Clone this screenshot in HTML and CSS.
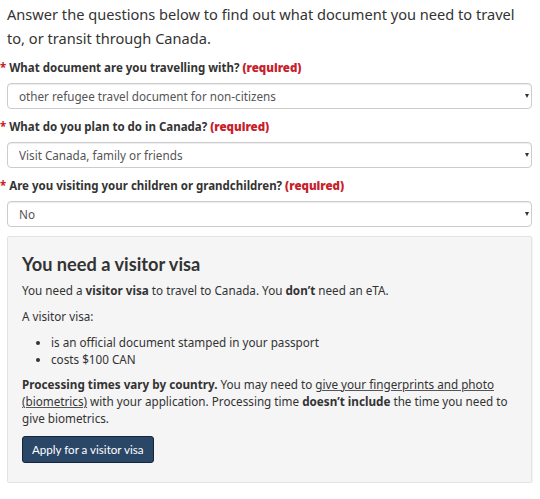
FILE: index.html
```html
<!DOCTYPE html>
<html lang="en">
<head>
<meta charset="utf-8">
<title>Find out if you need a visa</title>
<link rel="stylesheet" href="styles.css">
</head>
<body>
<main class="page">
  <p class="intro">Answer the questions below to find out what document you need to travel to, or transit through Canada.</p>

  <div class="field">
    <label class="label" for="q1"><span class="star">*</span> What document are you travelling with? <strong class="req">(required)</strong></label>
    <div class="select-wrap">
      <select id="q1" class="select"><option>other refugee travel document for non-citizens</option></select>
      <span class="arrow"></span>
    </div>
  </div>

  <div class="field">
    <label class="label" for="q2"><span class="star">*</span> What do you plan to do in Canada? <strong class="req">(required)</strong></label>
    <div class="select-wrap">
      <select id="q2" class="select"><option>Visit Canada, family or friends</option></select>
      <span class="arrow"></span>
    </div>
  </div>

  <div class="field">
    <label class="label" for="q3"><span class="star">*</span> Are you visiting your children or grandchildren? <strong class="req">(required)</strong></label>
    <div class="select-wrap">
      <select id="q3" class="select"><option>No</option></select>
      <span class="arrow"></span>
    </div>
  </div>

  <section class="result">
    <h2 class="result-title">You need a visitor visa</h2>
    <p class="text">You need a <strong>visitor visa</strong> to travel to Canada. You <strong>don’t</strong> need an eTA.</p>
    <p class="text">A visitor visa:</p>
    <ul class="list">
      <li>is an official document stamped in your passport</li>
      <li>costs $100 CAN</li>
    </ul>
    <p class="text"><strong>Processing times vary by country.</strong> You may need to <a class="link" href="#">give your fingerprints and photo (biometrics)</a> with your application. Processing time <strong>doesn’t include</strong> the time you need to give biometrics.</p>
    <a class="btn" href="#">Apply for a visitor visa</a>
  </section>
</main>
</body>
</html>
```

FILE: styles.css
```css
* { box-sizing: border-box; }

html, body {
  margin: 0;
  padding: 0;
  background: #fff;
}

body {
  font-family: "Noto Sans", "DejaVu Sans", sans-serif;
  color: #333;
}

.page {
  width: 540px;
  padding: 2px 0 0 0;
}

.intro {
  margin: 0 18px 9px 7px;
  font-size: 14.6px;
  line-height: 24px;
  color: #333;
}

.field {
  margin-bottom: 9px;
}

.label {
  display: block;
  font-size: 11.5px;
  line-height: 18px;
  font-weight: 700;
  color: #333;
  margin-bottom: 6px;
}

.star {
  color: #c8202a;
  font-weight: 700;
}

.req {
  color: #c8202a;
}

.select-wrap {
  position: relative;
  margin: 0 8px 0 7px;
}

.select {
  display: block;
  width: 100%;
  height: 26px;
  margin: 0;
  padding: 0 24px 0 11px;
  border: 1px solid #ccc;
  border-radius: 4px;
  background: #fff;
  box-shadow: inset 0 1px 1px rgba(0,0,0,0.075);
  font-family: "Noto Sans", "DejaVu Sans", sans-serif;
  font-size: 11.7px;
  color: #555;
  -webkit-appearance: none;
  appearance: none;
}

.arrow {
  position: absolute;
  right: 3px;
  top: 11px;
  width: 0;
  height: 0;
  border-left: 2.5px solid transparent;
  border-right: 2.5px solid transparent;
  border-top: 4px solid #333;
}

.result {
  margin: 1px 8px 0 7px;
  padding: 15px 14px 19px 14px;
  background: #f5f5f5;
  border: 1px solid #e3e3e3;
  border-radius: 2px;
  box-shadow: 1px 1px 2px rgba(0,0,0,0.06);
}

.result-title {
  margin: 0 0 6px 0;
  font-family: Lato, "Noto Sans", sans-serif;
  font-weight: 700;
  font-size: 18.2px;
  line-height: 24px;
  color: #333;
}

.text {
  margin: 0 0 9px 0;
  font-size: 11.7px;
  line-height: 17px;
  color: #333;
}

.list {
  margin: 0 0 8px 0;
  padding-left: 29px;
  font-size: 11.7px;
  line-height: 17px;
}

.link {
  color: #333;
  text-decoration: underline;
  text-decoration-color: #555;
}

.btn {
  display: inline-block;
  margin-top: 0;
  height: 27px;
  padding: 0 9px;
  line-height: 25px;
  background: #2b4768;
  border: 1px solid #13263b;
  border-radius: 3px;
  color: #fff;
  text-decoration: none;
  font-family: Lato, "Noto Sans", sans-serif;
  font-size: 11.6px;
}
```
